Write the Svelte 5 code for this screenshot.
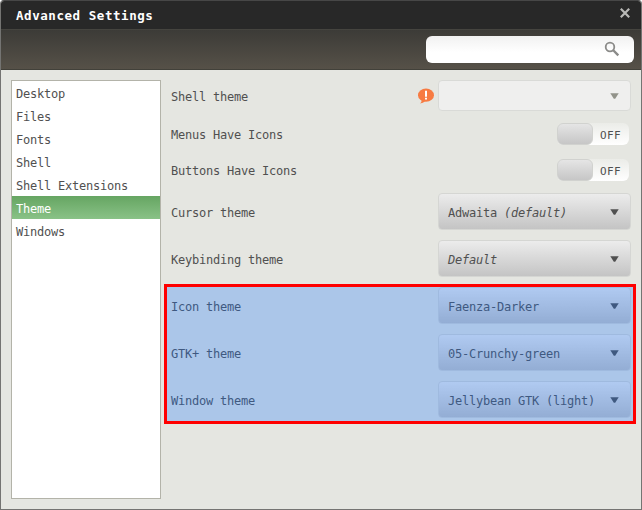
<script>
  const categories = ['Desktop', 'Files', 'Fonts', 'Shell', 'Shell Extensions', 'Theme', 'Windows'];
  const selected = 'Theme';
  const rows = [
    { label: 'Shell theme', kind: 'disabled' },
    { label: 'Menus Have Icons', kind: 'switch' },
    { label: 'Buttons Have Icons', kind: 'switch' },
    { label: 'Cursor theme', kind: 'combo', value: 'Adwaita ', note: '(default)' },
    { label: 'Keybinding theme', kind: 'combo', value: '', note: 'Default' },
    { label: 'Icon theme', kind: 'combo', value: 'Faenza-Darker' },
    { label: 'GTK+ theme', kind: 'combo', value: '05-Crunchy-green' },
    { label: 'Window theme', kind: 'combo', value: 'Jellybean GTK (light)' }
  ];
</script>

<div class="window">
  <header>
    <h1>Advanced Settings</h1>
    <svg class="close" width="12" height="12" viewBox="0 0 12 12"><path d="M1.8 1.8L10.2 10.2M10.2 1.8L1.8 10.2" stroke="#b9b9b7" stroke-width="2.2" /></svg>
  </header>
  <div class="toolbar">
    <div class="search">
      <svg width="16" height="16" viewBox="0 0 16 16" fill="none" stroke="#8b8b89">
        <circle cx="6" cy="6" r="4.3" stroke-width="1.8" />
        <path d="M9 9L14.3 14.3" stroke-width="2.4" />
      </svg>
    </div>
  </div>
  <main>
    <nav>
      {#each categories as name}
        <div class="item" class:selected={name === selected}>{name}</div>
      {/each}
    </nav>
    <section>
      {#each rows as row}
        <div class="row {row.kind}">
          <span class="label">{row.label}</span>
          {#if row.kind === 'switch'}
            <div class="track"><div class="knob"></div><span>OFF</span></div>
          {:else}
            {#if row.kind === 'disabled'}
              <svg class="warn" width="16" height="16" viewBox="0 0 16 16">
                <ellipse cx="8" cy="7.2" rx="8" ry="6.6" fill="#f77b42" />
                <path d="M3.6 11L7.5 13Q5 15.2 2 15.6Q4 14 3.6 11Z" fill="#f77b42" />
                <path d="M7 2.7H9V8.7H7ZM7 9.7H9V11.5H7Z" fill="#fff" />
              </svg>
            {/if}
            <div class="box">
              <span class="value">{row.value ?? ''}{#if row.note}<i>{row.note}</i>{/if}</span>
              <svg class="arrow" width="9" height="6" viewBox="0 0 9 6"><path d="M0.3 0.3H8.7L5.2 5.7H3.8Z" fill="currentColor" /></svg>
            </div>
          {/if}
        </div>
      {/each}
    </section>
  </main>
  <div class="highlight"></div>
</div>

<style>
  :global(body) {
    background: #fff;
  }
  .window {
    position: relative;
    box-sizing: border-box;
    width: 642px;
    height: 510px;
    display: flex;
    flex-direction: column;
    border: 1px solid #747472;
    border-top-color: #474747;
    border-radius: 4px 4px 0 0;
    background: #e5e6e1;
    overflow: hidden;
    font: 12px/23px 'DejaVu Sans Mono', monospace;
    letter-spacing: -0.224px;
    color: #505050;
    white-space: pre;
  }
  header {
    height: 28px;
    flex: none;
    display: flex;
    justify-content: space-between;
    background: #282828;
    padding: 0 10px 0 15px;
  }
  h1 {
    margin: 0;
    font-size: 12.5px;
    line-height: 29px;
    letter-spacing: 0.56px;
    font-weight: bold;
    color: #fff;
  }
  .close {
    margin-top: 6px;
  }
  .toolbar {
    box-sizing: border-box;
    height: 41px;
    flex: none;
    display: flex;
    justify-content: flex-end;
    padding: 6px 7px 0 0;
    border-top: 1px solid #45443f;
    border-bottom: 1px solid #42413a;
    background: linear-gradient(#3c3b37, #565148);
  }
  .search {
    width: 208px;
    height: 27px;
    border-radius: 6px;
    background: linear-gradient(#f1f1f1, #fff 60%);
    display: flex;
    justify-content: flex-end;
  }
  .search svg {
    margin: 5px 14px 0 0;
  }
  main {
    flex: 1;
    display: flex;
    padding: 10px;
    min-height: 0;
  }
  nav {
    box-sizing: border-box;
    width: 150px;
    height: 419px;
    flex: none;
    border: 1px solid #b3b3a9;
    background: #fff;
  }
  .item {
    height: 23px;
    padding-left: 4px;
    line-height: 26px;
  }
  .item.selected {
    color: #fff;
    background: linear-gradient(#66a562, #89c287);
  }
  section {
    flex: 1;
    margin-left: 10px;
  }
  .row {
    display: flex;
    align-items: center;
    height: 37px;
    margin-bottom: 10px;
  }
  .label {
    flex: 1;
    padding-top: 4px;
  }
  .row.disabled {
    height: 31px;
    margin-bottom: 12px;
  }
  .row.switch {
    height: 22px;
    margin-bottom: 14px;
    padding-right: 2px;
  }
  .row.switch .label {
    padding-top: 2px;
  }
  .row.switch + .row.combo {
    margin-top: -2px;
  }
  .warn {
    margin: 0 4px 0 0;
  }
  .box {
    box-sizing: border-box;
    width: 193px;
    height: 100%;
    display: flex;
    align-items: center;
    justify-content: space-between;
    padding: 0 11px 0 9px;
    border: 1px solid #d5d6d3;
    border-radius: 4px;
    background: linear-gradient(#ececec, #c4c4c4);
  }
  .value {
    padding-top: 4px;
  }
  .arrow {
    margin-top: 1px;
  }
  .disabled .box {
    border-color: #d9dad7;
    background: #efefee;
    color: #92938a;
  }
  .track {
    width: 72px;
    height: 22px;
    display: flex;
    border-radius: 6px;
    background: linear-gradient(#ebece8, #fff);
    font-size: 11px;
    letter-spacing: 0.378px;
    line-height: 25px;
  }
  .knob {
    box-sizing: border-box;
    width: 36px;
    height: 22px;
    margin-right: 7px;
    border: 1px solid #d1d2cf;
    border-radius: 6px;
    background: linear-gradient(#e5e5e5, #c6c6c6);
  }
  .highlight {
    position: absolute;
    box-sizing: border-box;
    left: 163px;
    top: 283px;
    width: 472px;
    height: 140px;
    border: 3px solid #f00;
    background: rgba(21, 116, 255, 0.28);
    background-clip: padding-box;
  }
</style>
